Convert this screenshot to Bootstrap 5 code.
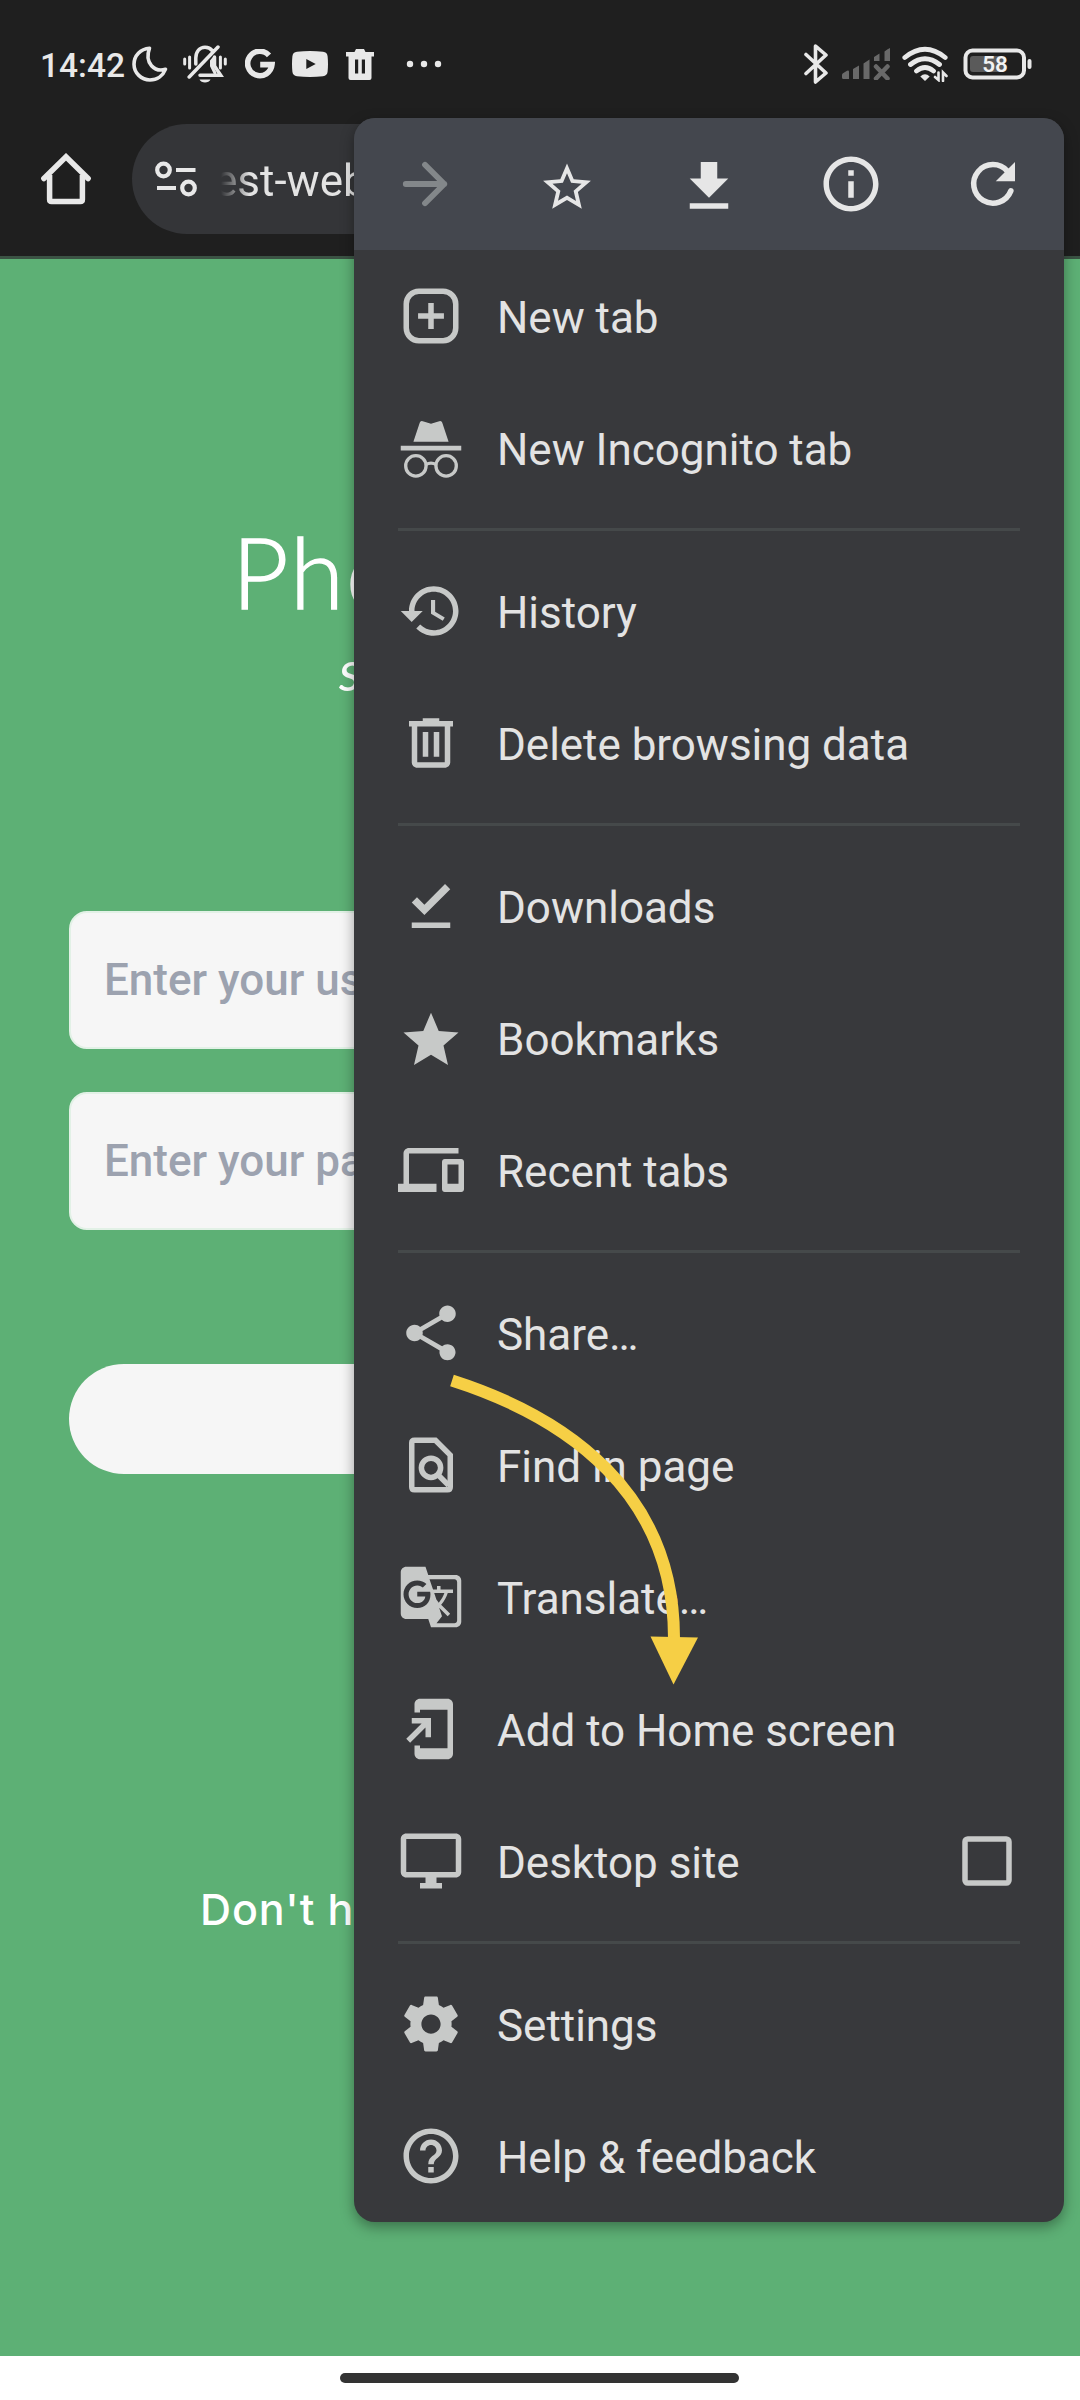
<!DOCTYPE html>
<html lang="en">
<head>
<meta charset="utf-8">
<meta name="viewport" content="width=device-width, initial-scale=1">
<title>Browser menu</title>
<link href="https://cdn.jsdelivr.net/npm/bootstrap@5.3.0/dist/css/bootstrap.min.css" rel="stylesheet">
<style>
  html, body { height: 2400px; overflow: hidden; }
  body { font-family: Roboto, "Liberation Sans", sans-serif; font-size: 44px; background: #fff; }
  svg { display: block; flex: none; }
  .phone { width: 1080px; height: 2400px; }

  .chrome-top { background: #1f1f1f; height: 259px; border-bottom: 3px solid #3b5344; color: #e8e8e8; }
  .status { height: 124px; padding: 4px 48px 0 40px; }
  .clock { font-size: 33.5px; font-weight: 500; line-height: 1; width: 92px; padding-top: 3px; }
  .toolbar { height: 110px; padding-left: 41px; }
  .omnibox { height: 110px; margin-left: 41px; margin-right: 60px; padding-left: 23px; background: #343538; }
  .url { line-height: 1; margin-left: 16px; padding-top: 3px; color: #e3e3e3;
         -webkit-mask-image: linear-gradient(90deg, transparent 7px, #000 36px); mask-image: linear-gradient(90deg, transparent 7px, #000 36px); }

  .site { height: 2097px; background: #5db075; padding: 253px 69px 0; color: #fff; }
  .site-title { font-family: Lato, sans-serif; font-weight: 300; font-size: 98px; line-height: 118px; padding-left: 163px; letter-spacing: 2px; margin: 0; -webkit-text-stroke: 1.4px #fff; }
  .site-sub { font-family: Lato, sans-serif; font-weight: 400; font-style: italic; font-size: 57px; line-height: 60px; padding-left: 270px; margin: 9px 0 212px; }
  .field { height: 137.5px; border: 2px solid #e2f1e6; border-radius: 18px; background: #f6f6f6; padding: 0 33px; font-size: 44px; font-weight: 500; margin-bottom: 43.5px; color: #9ca2af; }
  .field::placeholder { color: #9ca2af; opacity: 1; }
  .submit { height: 110px; background: #f6f6f6; border: 0; margin-top: 91px; }
  .signup { font-family: Inter, sans-serif; font-weight: 500; font-size: 43px; line-height: 60px; padding-left: 131px; letter-spacing: .9px; margin: 405px 0 0; }

  .gesture { height: 44px; padding-top: 17px; }
  .gesture-pill { width: 399px; height: 10px; background: #333; margin-right: 2px; }

  .app-menu { position: absolute; left: 354px; top: 118px; width: 710px; border-radius: 21px; background: #38393c; color: #e3e3e3;
              box-shadow: 0 5px 14px rgba(0,0,0,.36); overflow: hidden; }
  .menu-bar { height: 132px; background: #44474e; color: #e6e6e6; }
  .menu-line { height: 132px; padding: 0 44px; gap: 33px; }
  .menu-line svg { color: #c7c9c8; }
  .menu-line .txt { line-height: 1; padding-top: 3px; white-space: nowrap; letter-spacing: -.03px; }
  .rule { height: 3px; margin: 14px 44px; background: #45494a; }
  .pointer { position: absolute; left: 440px; top: 1360px; }
</style>
</head>
<body>
<div class="phone position-relative overflow-hidden d-flex flex-column">

  <header class="chrome-top">
    <div class="status d-flex align-items-center">
      <span class="clock">14:42</span>
      <svg width="36" height="36" viewBox="0 0 36 36" fill="none" stroke="currentColor" stroke-width="3.600" stroke-linejoin="round"><path d="M17.500 2.200C8.500 2.800 2 9.600 2 18.200a16 16 0 0 0 16 15.800c7 0 13-4.200 15.500-10.800C23 26.500 12 17.500 17.500 2.200z"/></svg>
      <svg style="margin-left:15px" width="44" height="38" viewBox="0 0 44 38" fill="none" stroke="currentColor" stroke-width="3.500" stroke-linecap="round"><path d="M1.700 14v5M6.600 12v11M37.400 12v11M42.300 14v5" stroke-width="3"/><path d="M12.800 19V13c0-6.500 4-10.800 9.200-10.800 3 0 5.600 1.200 7.200 3.400M31.500 12v9l6.200 9.300H17M6.200 32L35 2"/><path d="M31 13l-2.500 3v5l3.500 7" stroke-width="3"/><path d="M16.500 34.500h11c-1.500 4-9.500 4-11 0z" fill="currentColor" stroke="none"/></svg>
      <svg style="margin-left:18px" width="30" height="30" viewBox="0 0 30 30" fill="none" stroke="currentColor" stroke-width="5.600"><path d="M24 6.400A12.200 12.200 0 1 0 27 15.600H15.200"/></svg>
      <svg style="margin-left:17px" width="36" height="26" viewBox="0 0 36 26"><path fill="currentColor" fill-rule="evenodd" d="M5 .8Q18-.6 31 .8q4.200.4 4.600 4.400.8 7.800 0 15.600-.4 4-4.600 4.400-13 1.400-26 0-4.200-.4-4.600-4.400-.8-7.800 0-15.600Q.8 1.200 5 .8zM14.300 8v10l9.400-5z"/></svg>
      <svg style="margin-left:18px" width="28" height="31" viewBox="0 0 28 31"><path fill="currentColor" fill-rule="evenodd" d="M10 0h8l1.500 3H28v4.500h-2.500V29q0 2-2 2h-19q-2 0-2-2V7.500H0V3h8.500zM9 10.500v14h3.200v-14zm6.800 0v14H19v-14z"/></svg>
      <svg style="margin-left:32px" width="36" height="8" viewBox="0 0 36 8" fill="currentColor"><circle cx="4" cy="4" r="3.200"/><circle cx="18" cy="4" r="3.200"/><circle cx="32" cy="4" r="3.200"/></svg>

      <svg class="ms-auto" width="25" height="40" viewBox="0 0 25 40" fill="none" stroke="currentColor" stroke-width="3.600" stroke-linejoin="round" stroke-linecap="round"><path d="M2 10.500L22 29 11.500 38V2L22 11 2 29.500"/></svg>
      <svg style="margin-left:13px" width="49" height="32" viewBox="0 0 49 32" fill="#696969"><path d="M0 27q0-1 1-1.800l4-2.400q2-.8 2 1V31H1.500Q0 31 0 29.500zM11 21l6-3.500V31h-6zM21.500 15.500l6-4V31h-6zM32 9l5.500-3.500V13H32zM42.500 3.500Q46 .5 48 0v13h-5.500z"/><path d="M34 18.500l11.500 12M45.500 18.500l-11.500 12" stroke="#696969" stroke-width="4.500" stroke-linecap="round"/></svg>
      <svg style="margin-left:11px" width="48" height="36" viewBox="0 0 48 36" fill="none" stroke="currentColor" stroke-width="4.800" stroke-linecap="round"><path d="M2.800 11.500Q23-5 43.200 11.500M8.500 18.500q14.500-11.500 29 0M14.500 25q8.500-7 17 0"/><path d="M18.300 30.500q4.700-4.500 9.400 0L23 35z" fill="currentColor" stroke="none"/><path d="M33 31l3.500 3V26.500M44.500 30L41 26.500V35" stroke-width="2.600"/></svg>
      <svg style="margin-left:13px" width="69" height="32" viewBox="0 0 69 32"><rect x="7" y="8" width="34" height="16" rx="3" fill="#5a5a5a"/><rect x="2.500" y="2.500" width="58.500" height="27" rx="7" fill="none" stroke="currentColor" stroke-width="4"/><rect x="64.500" y="11" width="4" height="10" rx="2" fill="currentColor"/><text x="32" y="24" text-anchor="middle" font-family="Roboto, sans-serif" font-size="22.500" font-weight="600" fill="#f2f2f2">58</text></svg>
    </div>
    <div class="toolbar d-flex align-items-center">
      <svg width="50" height="52" viewBox="0 0 50 52" fill="none" stroke="currentColor" stroke-width="5.500" stroke-linejoin="round" stroke-linecap="round"><path d="M2.900 25.500L25 3.800 47.100 25.500" stroke-linejoin="miter"/><path d="M8.600 22v24.500q0 2 2 2h28.800q2 0 2-2V22" stroke-linecap="butt"/></svg>
      <div class="omnibox rounded-pill flex-grow-1 d-flex align-items-center">
        <svg width="43" height="36" viewBox="0 0 43 36" fill="none" stroke="currentColor" stroke-width="4.200"><circle cx="8.500" cy="9" r="6.300"/><circle cx="33.500" cy="27" r="6.300"/><path d="M21 9h19.500M2 27h19"/></svg>
        <span class="url">est-web</span>
      </div>
    </div>
  </header>

  <main class="site d-flex flex-column">
    <h1 class="site-title">Pho</h1>
    <p class="site-sub">s</p>
    <input class="field form-control" type="text" placeholder="Enter your us">
    <input class="field form-control" type="text" placeholder="Enter your pa">
    <button class="submit btn rounded-pill w-100" type="button" aria-label="Submit"></button>
    <p class="signup">Don't ha</p>
  </main>

  <footer class="gesture bg-white d-flex justify-content-center"><div class="gesture-pill rounded-pill"></div></footer>

  <nav class="app-menu">
    <div class="menu-bar row g-0 align-items-center">
      <div class="col d-flex justify-content-center"><svg width="66" height="66" viewBox="0 0 24 24" fill="none" stroke="#83878a" stroke-width="2.100" stroke-linecap="round" stroke-linejoin="round"><path d="M5 12h14M12 5l7 7-7 7"/></svg></div>
      <div class="col d-flex justify-content-center"><svg width="66" height="66" viewBox="0 0 24 24" fill="currentColor"><path transform="translate(1.560 2.760) scale(.87)" d="M22 9.240l-7.190-.62L12 2 9.190 8.630 2 9.240l5.460 4.730L5.820 21 12 17.270 18.180 21l-1.630-7.030L22 9.240zM12 15.400l-3.760 2.270 1-4.280-3.320-2.880 4.380-.38L12 6.100l1.710 4.040 4.380.38-3.320 2.880 1 4.280L12 15.400z"/></svg></div>
      <div class="col d-flex justify-content-center"><svg width="66" height="66" viewBox="0 0 24 24" fill="currentColor"><path d="M19 10h-4V4H9v6H5l7 7 7-7zM5 19v2h14v-2z"/></svg></div>
      <div class="col d-flex justify-content-center"><svg width="66" height="66" viewBox="0 0 24 24" fill="currentColor"><path d="M11 7h2v2h-2zm0 4h2v6h-2zm1-9C6.480 2 2 6.480 2 12s4.480 10 10 10 10-4.480 10-10S17.520 2 12 2zm0 18c-4.410 0-8-3.590-8-8s3.590-8 8-8 8 3.590 8 8-3.590 8-8 8z"/></svg></div>
      <div class="col d-flex justify-content-center"><svg width="66" height="66" viewBox="0 0 24 24"><path d="M17.300 7.400A7 7 0 1 0 18.500 14.500" fill="none" stroke="currentColor" stroke-width="2" stroke-linecap="round"/><path d="M20 4v7h-7z" fill="currentColor"/></svg></div>
    </div>

    <div class="menu-line d-flex align-items-center"><svg width="66" height="66" viewBox="0 0 24 24" fill="none" stroke="currentColor" stroke-width="2"><rect x="3" y="3" width="18" height="18" rx="4.600"/><path d="M12 7.300v9.400M7.300 12h9.400"/></svg><span class="txt">New tab</span></div>
    <div class="menu-line d-flex align-items-center"><svg width="66" height="66" viewBox="0 0 24 24" fill="currentColor"><path d="M5.600 9.700L7.900 2.800q.3-.8 1.100-.5l3 .9 3-.9q.8-.3 1.100.5l2.300 6.900zM1 11.200h22v1.700H1z"/><g fill="none" stroke="currentColor" stroke-width="1.200"><circle cx="6.500" cy="18.500" r="3.700"/><circle cx="17.500" cy="18.500" r="3.700"/><path d="M10.100 18q1.900-1 3.800 0"/></g></svg><span class="txt">New Incognito tab</span></div>
    <div class="rule"></div>
    <div class="menu-line d-flex align-items-center"><svg width="66" height="66" viewBox="0 0 24 24" fill="currentColor"><path d="M13 3c-4.970 0-9 4.030-9 9H1l3.890 3.890.07.14L9 12H6c0-3.870 3.130-7 7-7s7 3.130 7 7-3.130 7-7 7c-1.930 0-3.680-.79-4.940-2.060l-1.420 1.420C8.270 19.990 10.510 21 13 21c4.970 0 9-4.030 9-9s-4.030-9-9-9zm-1 5v5l4.280 2.540.72-1.210-3.500-2.080V8H12z"/></svg><span class="txt">History</span></div>
    <div class="menu-line d-flex align-items-center"><svg width="66" height="66" viewBox="0 0 24 24" fill="currentColor"><path d="M15 4V3H9v1H4v2h1v13c0 1.100.9 2 2 2h10c1.100 0 2-.9 2-2V6h1V4h-5zm2 15H7V6h10v13zM9 8h2v9H9zm4 0h2v9h-2z"/></svg><span class="txt">Delete browsing data</span></div>
    <div class="rule"></div>
    <div class="menu-line d-flex align-items-center"><svg width="66" height="66" viewBox="0 0 24 24" fill="currentColor"><path d="M17.100 4L19 5.900l-9.400 9.400L5 10.700l1.900-1.900 2.700 2.700zM5 18h14v2H5z"/></svg><span class="txt">Downloads</span></div>
    <div class="menu-line d-flex align-items-center"><svg width="66" height="66" viewBox="0 0 24 24" fill="currentColor"><path d="M12 18.070L18.180 21.800l-1.640-7.030L22 10.040l-7.190-.61L12 2.800 9.190 9.430 2 10.040l5.460 4.730L5.820 21.800z"/></svg><span class="txt">Bookmarks</span></div>
    <div class="menu-line d-flex align-items-center"><svg width="66" height="66" viewBox="0 0 24 24" fill="currentColor"><path d="M4 6h18V4H4c-1.100 0-2 .9-2 2v11H0v3h14v-3H4V6zm19 2h-6c-.55 0-1 .45-1 1v10c0 .55.45 1 1 1h6c.55 0 1-.45 1-1V9c0-.55-.45-1-1-1zm-1 9h-4v-7h4v7z"/></svg><span class="txt">Recent tabs</span></div>
    <div class="rule"></div>
    <div class="menu-line d-flex align-items-center"><svg width="66" height="66" viewBox="0 0 24 24" fill="currentColor"><path d="M18 16.080c-.76 0-1.440.3-1.960.77L8.910 12.700c.05-.23.09-.46.09-.7s-.04-.47-.09-.7l7.050-4.110c.54.5 1.250.81 2.040.81 1.660 0 3-1.340 3-3s-1.340-3-3-3-3 1.340-3 3c0 .24.04.47.09.7L8.040 9.810C7.500 9.310 6.790 9 6 9c-1.660 0-3 1.340-3 3s1.340 3 3 3c.79 0 1.500-.31 2.040-.81l7.120 4.160c-.05.21-.08.43-.08.65 0 1.610 1.310 2.920 2.920 2.920s2.920-1.310 2.920-2.920-1.310-2.920-2.920-2.920z"/></svg><span class="txt">Share…</span></div>
    <div class="menu-line d-flex align-items-center"><svg width="66" height="66" viewBox="0 0 24 24" fill="none" stroke="currentColor" stroke-width="2"><path d="M6 3h7.600L19 8.400V20q0 1-1 1H6q-1 0-1-1V4q0-1 1-1z"/><circle cx="12" cy="13" r="3.500"/><path d="M14.400 15.400l4 4"/></svg><span class="txt">Find in page</span></div>
    <div class="menu-line d-flex align-items-center"><svg width="66" height="66" viewBox="0 0 24 24" fill="currentColor"><path d="M21 4H11l-1-3H3c-1.100 0-2 .9-2 2v15c0 1.100.9 2 2 2h8l1 3h9c1.100 0 2-.9 2-2V6c0-1.100-.9-2-2-2zM7 16c-2.760 0-5-2.240-5-5s2.240-5 5-5c1.350 0 2.480.5 3.350 1.300L9.030 8.570c-.38-.36-1.040-.78-2.030-.78-1.740 0-3.150 1.440-3.150 3.210S5.260 14.210 7 14.210c2.010 0 2.840-1.440 2.920-2.410H7v-1.710h4.680c.07.31.12.61.12 1.020C11.800 13.970 9.890 16 7 16zm6.170-5.420h3.700c-.43 1.250-1.110 2.430-2.050 3.470-.31-.35-.6-.72-.86-1.100l-.79-2.370zm8.330 9.920c0 .55-.45 1-1 1H14l2-2.500-1.040-3.100 3.100 3.100.92-.92-3.300-3.250.02-.02c1.130-1.250 1.930-2.690 2.400-4.220H20v-1.300h-4.530V8h-1.290v1.290h-1.440L11.460 5.500h9.040c.55 0 1 .45 1 1v14z"/></svg><span class="txt">Translate…</span></div>
    <div class="menu-line d-flex align-items-center"><svg width="66" height="66" viewBox="0 0 24 24" fill="currentColor"><path d="M18 1.010L8 1c-1.100 0-2 .9-2 2v3h2V5h10v14H8v-1H6v3c0 1.100.9 2 2 2h10c1.100 0 2-.9 2-2V3c0-1.100-.9-1.990-2-1.990zM10 15h2V8H5v2h3.590L3 15.590 4.410 17 10 11.410z"/></svg><span class="txt">Add to Home screen</span></div>
    <div class="menu-line d-flex align-items-center"><svg width="66" height="66" viewBox="0 0 24 24" fill="currentColor"><path d="M21 2H3c-1.100 0-2 .9-2 2v12c0 1.100.9 2 2 2h7v2H8v2h8v-2h-2v-2h7c1.100 0 2-.9 2-2V4c0-1.100-.9-2-2-2zm0 14H3V4h18v12z"/></svg><span class="txt">Desktop site</span><svg class="ms-auto" width="66" height="66" viewBox="0 0 24 24" fill="none" stroke="currentColor" stroke-width="2"><rect x="4" y="4" width="16" height="16" rx="1"/></svg></div>
    <div class="rule"></div>
    <div class="menu-line d-flex align-items-center"><svg width="66" height="66" viewBox="0 0 24 24" fill="currentColor"><path d="M19.430 12.980c.04-.32.07-.64.07-.98s-.03-.66-.07-.98l2.110-1.650c.19-.15.24-.42.12-.64l-2-3.460c-.12-.22-.39-.3-.61-.22l-2.490 1c-.52-.4-1.080-.73-1.690-.98l-.38-2.650C14.460 2.180 14.250 2 14 2h-4c-.25 0-.46.18-.49.42l-.38 2.650c-.61.25-1.170.59-1.690.98l-2.490-1c-.23-.09-.49 0-.61.22l-2 3.460c-.13.22-.07.49.12.64l2.110 1.650c-.04.32-.07.65-.07.98s.03.66.07.98l-2.110 1.650c-.19.15-.24.42-.12.64l2 3.460c.12.22.39.3.61.22l2.490-1c.52.4 1.080.73 1.690.98l.38 2.650c.03.24.24.42.49.42h4c.25 0 .46-.18.49-.42l.38-2.650c.61-.25 1.170-.59 1.690-.98l2.490 1c.23.09.49 0 .61-.22l2-3.460c.12-.22.07-.49-.12-.64l-2.110-1.650zM12 15.500c-1.930 0-3.500-1.570-3.500-3.500s1.570-3.500 3.500-3.500 3.500 1.570 3.500 3.500-1.570 3.500-3.500 3.500z"/></svg><span class="txt">Settings</span></div>
    <div class="menu-line d-flex align-items-center"><svg width="66" height="66" viewBox="0 0 24 24" fill="currentColor"><path d="M11 18h2v-2h-2v2zm1-16C6.480 2 2 6.480 2 12s4.480 10 10 10 10-4.480 10-10S17.520 2 12 2zm0 18c-4.410 0-8-3.590-8-8s3.590-8 8-8 8 3.590 8 8-3.590 8-8 8zm0-14c-2.210 0-4 1.790-4 4h2c0-1.100.9-2 2-2s2 .9 2 2c0 2-3 1.750-3 5h2c0-2.250 3-2.500 3-5 0-2.210-1.790-4-4-4z"/></svg><span class="txt">Help &amp; feedback</span></div>
  </nav>

  <!-- Callout arrow from Share to Add to Home screen -->
  <svg class="pointer" width="270" height="330" viewBox="440 1360 270 330"><path d="M452 1380.500C569 1418 674 1494 674 1638" fill="none" stroke="#f6cf45" stroke-width="12"/><path d="M650.500 1636.500l47.500 1-24.500 47z" fill="#f6cf45"/></svg>
</div>
<script src="https://cdn.jsdelivr.net/npm/bootstrap@5.3.0/dist/js/bootstrap.bundle.min.js"></script>
</body>
</html>
